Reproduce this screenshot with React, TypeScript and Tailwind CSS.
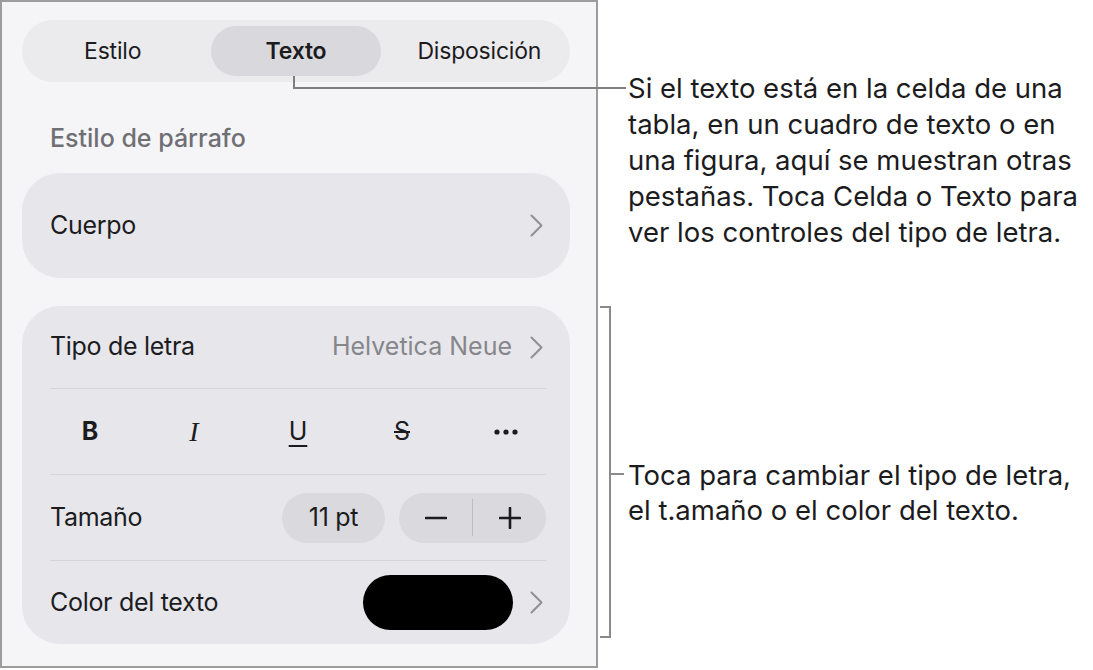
import React from 'react'

const Chevron = () => (
  <svg width="13" height="23" viewBox="0 0 13 23" fill="none" className="shrink-0">
    <path d="M1.5 1.5 L11.5 11.5 L1.5 21.5" stroke="#909095" strokeWidth="2" strokeLinecap="round" strokeLinejoin="round" />
  </svg>
)

const Divider = () => <div className="h-px bg-[#d4d4d9]" />

export default function App() {
  return (
    <div className="relative flex w-[1093px] h-[670px] bg-white font-['Inter',sans-serif] text-[#1c1c1e]">
      {/* panel */}
      <div className="w-[598px] h-[668px] shrink-0 border-2 border-[#9c9c9c] bg-[#f5f5f7] pt-[18px] px-[20px]">
        <div className="grid grid-cols-3 gap-[14px] h-[62px] rounded-full bg-[#ebebee] p-[6px] w-[548px]">
          <div className="flex items-center justify-center text-[23px] tracking-[-0.2px]">Estilo</div>
          <div className="flex items-center justify-center rounded-full bg-[#d9d9dd] text-[23px] font-semibold tracking-[-0.2px]">Texto</div>
          <div className="flex items-center justify-center text-[23px] tracking-[-0.2px]">Disposición</div>
        </div>

        <div className="mt-[41px] pl-[28px] text-[25px] font-medium text-[#6f6f74] leading-[30px]">Estilo de párrafo</div>

        <div className="mt-[20px] flex items-center justify-between h-[105px] w-[548px] rounded-[38px] bg-[#e6e6eb] pl-[28px] pr-[27px]">
          <span className="text-[25px] tracking-[-0.3px]">Cuerpo</span>
          <Chevron />
        </div>

        <div className="mt-[28px] w-[548px] rounded-[38px] bg-[#e6e6eb] pl-[28px] pr-[24px]">
          <div className="flex items-center justify-between h-[82px]">
            <span className="text-[25px] tracking-[-0.3px]">Tipo de letra</span>
            <div className="flex items-center gap-[18px] pr-[3px]">
              <span className="text-[25px] text-[#86868b]">Helvetica Neue</span>
              <Chevron />
            </div>
          </div>
          <Divider />
          <div className="flex items-center justify-between h-[85px]">
            <div className="w-[80px] flex justify-center text-[25px] font-bold">B</div>
            <div className="w-[80px] flex justify-center text-[28px] italic font-['Liberation_Serif',serif]">I</div>
            <div className="w-[80px] flex justify-center">
              <span className="text-[25px] underline decoration-2 underline-offset-[5px]">U</span>
            </div>
            <div className="w-[80px] flex justify-center">
              <span className="text-[25px] line-through decoration-2">S</span>
            </div>
            <div className="w-[80px] flex justify-center">
              <svg width="24" height="6" viewBox="0 0 24 6">
                <circle cx="3" cy="3" r="2.6" fill="#1c1c1e" />
                <circle cx="12" cy="3" r="2.6" fill="#1c1c1e" />
                <circle cx="21" cy="3" r="2.6" fill="#1c1c1e" />
              </svg>
            </div>
          </div>
          <Divider />
          <div className="flex items-center justify-between h-[85px]">
            <span className="text-[25px] tracking-[-0.3px]">Tamaño</span>
            <div className="flex items-center gap-[14px]">
              <div className="flex items-center justify-center w-[103px] h-[50px] rounded-full bg-[#d9d9de] text-[25px] tracking-[-0.3px]">11 pt</div>
              <div className="flex items-center w-[147px] h-[50px] rounded-full bg-[#d9d9de]">
                <div className="flex-1 flex justify-center">
                  <svg width="22" height="4" viewBox="0 0 22 4">
                    <path d="M1 2 H21" stroke="#1c1c1e" strokeWidth="2.6" strokeLinecap="round" />
                  </svg>
                </div>
                <div className="w-px h-[37px] bg-[#bcbcc1]" />
                <div className="flex-1 flex justify-center">
                  <svg width="22" height="22" viewBox="0 0 22 22">
                    <path d="M1 11 H21 M11 1 V21" stroke="#1c1c1e" strokeWidth="2.6" strokeLinecap="round" />
                  </svg>
                </div>
              </div>
            </div>
          </div>
          <Divider />
          <div className="flex items-center justify-between h-[83px]">
            <span className="text-[25px] tracking-[-0.3px]">Color del texto</span>
            <div className="flex items-center gap-[17px] pr-[3px]">
              <div className="w-[150px] h-[55px] rounded-full bg-black" />
              <Chevron />
            </div>
          </div>
        </div>
      </div>

      {/* callout text */}
      <div className="pl-[30px] pt-[70px] text-[27.5px] leading-[36px] text-[#1c1c1e] whitespace-nowrap">
        <p>
          Si el texto está en la celda de una<br />
          tabla, en un cuadro de texto o en<br />
          una figura, aquí se muestran otras<br />
          pestañas. Toca Celda o Texto para<br />
          ver los controles del tipo de letra.
        </p>
        <p className="mt-[208px] leading-[35px]">
          Toca para cambiar el tipo de letra,<br />
          el t.amaño o el color del texto.
        </p>
      </div>

      {/* leader lines */}
      <div className="absolute left-[293px] top-[76px] w-[2px] h-[13px] bg-[#7f7f7f]" />
      <div className="absolute left-[293px] top-[87px] w-[333px] h-[2px] bg-[#7f7f7f]" />
      <div className="absolute left-[609px] top-[306px] w-[2px] h-[332px] bg-[#8a8a8a]" />
      <div className="absolute left-[600px] top-[306px] w-[11px] h-[2px] bg-[#8a8a8a]" />
      <div className="absolute left-[600px] top-[636px] w-[11px] h-[2px] bg-[#8a8a8a]" />
      <div className="absolute left-[609px] top-[473px] w-[15px] h-[2px] bg-[#8a8a8a]" />
    </div>
  )
}
